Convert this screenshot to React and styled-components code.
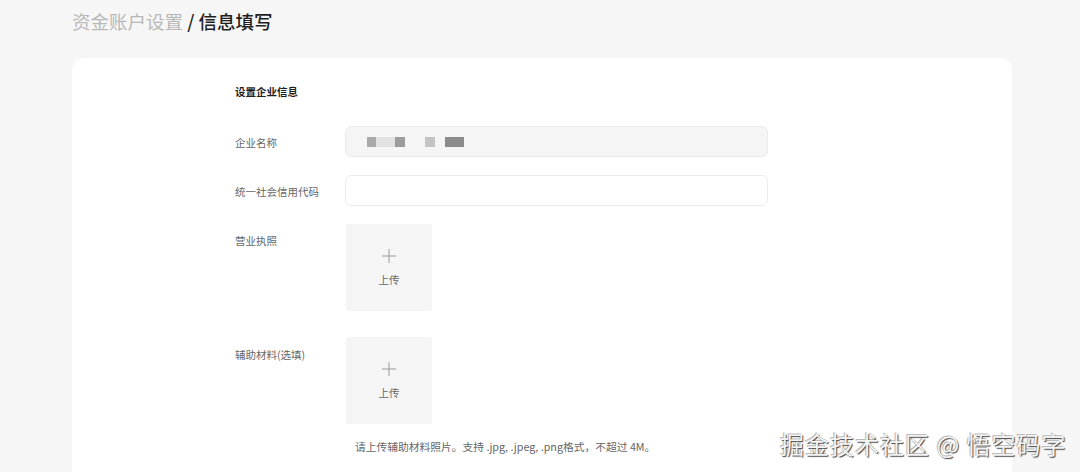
import React from "react";
import styled, { createGlobalStyle } from "styled-components";

const GlobalStyle = createGlobalStyle`
  html, body {
    margin: 0;
    padding: 0;
    background: #f6f6f6;
    font-family: "Noto Sans CJK SC", "Noto Sans", "Liberation Sans", sans-serif;
    overflow: hidden;
  }
`;

const Page = styled.div`
  position: relative;
  height: 472px;
  padding: 0 68px 0 72px;
  box-sizing: border-box;
`;

const Breadcrumb = styled.h1`
  margin: 0;
  padding-top: 8px;
  height: 58px;
  box-sizing: border-box;
  font-size: 18.5px;
  line-height: 26px;
  font-weight: 400;
  color: #b8b8b8;
`;

const Current = styled.span`
  color: #1f1f1f;
  font-weight: 500;
`;

const Card = styled.div`
  background: #fff;
  border-radius: 12px;
  height: 430px;
  padding: 26px 0 0 163px;
  box-sizing: border-box;
`;

const SectionTitle = styled.div`
  font-size: 10.5px;
  line-height: 16px;
  font-weight: 700;
  color: #1f1f1f;
  margin-bottom: 26px;
`;

const FormItem = styled.div`
  display: flex;
  align-items: flex-start;
  margin-bottom: ${(p) => p.$gap || 18}px;
`;

const Label = styled.div`
  width: 110px;
  flex-shrink: 0;
  font-size: 10.5px;
  line-height: 16px;
  padding-top: ${(p) => p.$top || 9}px;
  color: #666;
`;

const Input = styled.div`
  width: 423px;
  height: 31px;
  box-sizing: border-box;
  border: 1px solid #ececec;
  border-radius: 6px;
  background: ${(p) => (p.$filled ? "#f5f5f5" : "#fff")};
  display: flex;
  align-items: center;
  padding-left: 21px;
`;

const Mosaic = styled.span`
  display: inline-block;
  width: ${(p) => p.$w}px;
  height: 10px;
  margin-left: ${(p) => p.$ml || 0}px;
  background: ${(p) => p.$c};
`;

const Upload = styled.div`
  width: 86px;
  height: 87px;
  margin-left: 1px;
  background: #f5f5f5;
  border-radius: 2px;
  display: flex;
  flex-direction: column;
  align-items: center;
  padding-top: 25px;
  box-sizing: border-box;
  gap: 10px;
`;

const UploadText = styled.span`
  font-size: 10.5px;
  line-height: 14px;
  color: #666;
`;

const Hint = styled.div`
  margin-left: 120px;
  font-size: 10.75px;
  line-height: 14px;
  color: #666;
  margin-top: -4px;
`;

const Watermark = styled.div`
  position: absolute;
  left: 780px;
  top: 428px;
  font-size: 24px;
  line-height: 32px;
  letter-spacing: 1px;
  color: #f4f4f4;
  text-shadow: 1px 1px 1px #444, -1px -1px 0 #bbb;
  white-space: nowrap;
`;

const Plus = () => (
  <svg width="14" height="14" viewBox="0 0 14 14">
    <path d="M7 0v14M0 7h14" stroke="#999" strokeWidth="1" fill="none" />
  </svg>
);

const UploadBox = () => (
  <Upload>
    <Plus />
    <UploadText>上传</UploadText>
  </Upload>
);

export default function App() {
  return (
    <>
      <GlobalStyle />
      <Page>
        <Breadcrumb>
          资金账户设置 <Current>/ 信息填写</Current>
        </Breadcrumb>
        <Card>
          <SectionTitle>设置企业信息</SectionTitle>
          <FormItem>
            <Label $top={9}>企业名称</Label>
            <Input $filled>
              <Mosaic $w={9} $c="#aaa" />
              <Mosaic $w={19} $c="#e2e2e2" />
              <Mosaic $w={10} $c="#9c9c9c" />
              <Mosaic $w={10} $ml={20} $c="#c4c4c4" />
              <Mosaic $w={19} $ml={10} $c="#8c8c8c" />
            </Input>
          </FormItem>
          <FormItem>
            <Label $top={9}>统一社会信用代码</Label>
            <Input />
          </FormItem>
          <FormItem $gap={26}>
            <Label $top={9}>营业执照</Label>
            <UploadBox />
          </FormItem>
          <FormItem $gap={20}>
            <Label $top={10}>辅助材料(选填)</Label>
            <UploadBox />
          </FormItem>
          <Hint>请上传辅助材料照片。支持 .jpg, .jpeg, .png格式，不超过 4M。</Hint>
        </Card>
        <Watermark>掘金技术社区 @ 悟空码字</Watermark>
      </Page>
    </>
  );
}
